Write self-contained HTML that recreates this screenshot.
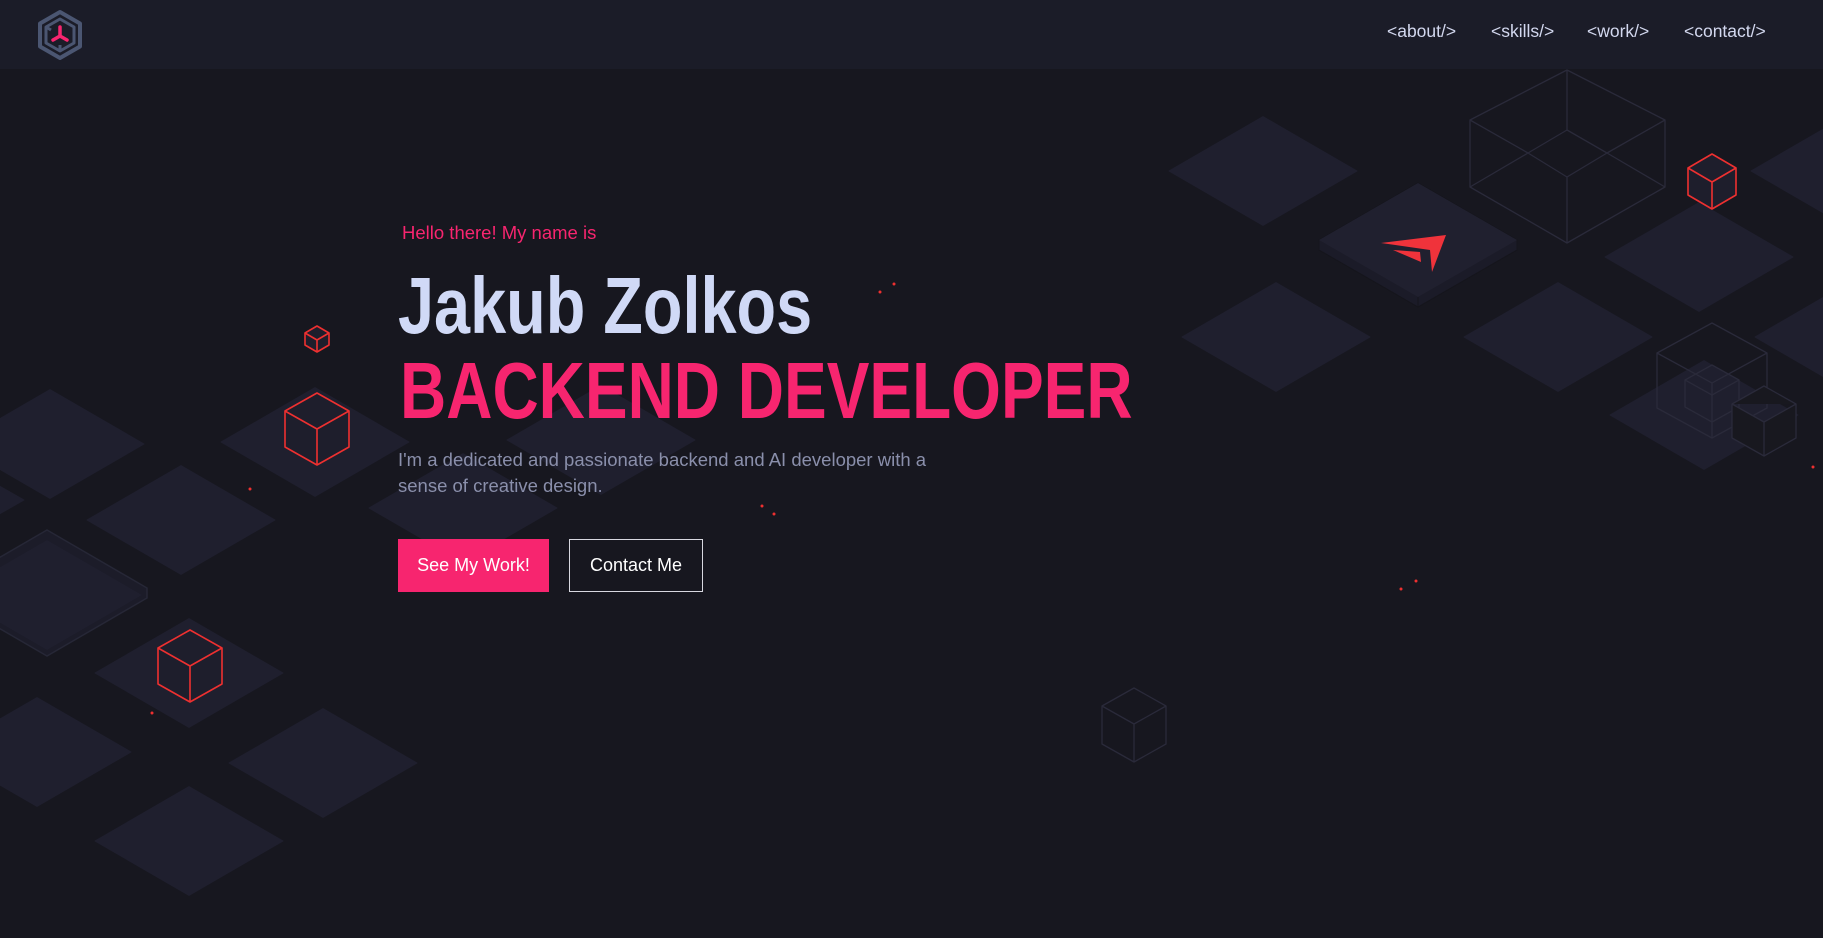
<!DOCTYPE html>
<html><head><meta charset="utf-8"><style>
*{margin:0;padding:0;box-sizing:border-box}
body{width:1823px;height:938px;overflow:hidden;background:#17171f;font-family:"Liberation Sans",sans-serif;position:relative}
svg.bg{position:absolute;left:0;top:0}
nav{position:absolute;left:0;top:0;width:1823px;height:69px;background:#1b1c28}
nav a{position:absolute;top:21px;color:#d3d8ef;font-size:17.5px;text-decoration:none}
.t{position:absolute;white-space:nowrap;transform-origin:0 0}
.btn{position:absolute;top:539px;height:53px;color:#fff;font-size:18px;display:flex;align-items:center;justify-content:center}
</style></head><body>
<svg class="bg" width="1823" height="938" viewBox="0 0 1823 938">
<g fill="#1f1f2e">
<path d="M1263,116 l95,55 -95,55 -95,-55z"/>
<path d="M1699,202 l95,55 -95,55 -95,-55z"/>
<path d="M1845,116 l95,55 -95,55 -95,-55z"/>
<path d="M1276,282 l95,55 -95,55 -95,-55z"/>
<path d="M1558,282 l95,55 -95,55 -95,-55z"/>
<path d="M1704,360 l95,55 -95,55 -95,-55z"/>
<path d="M1849,282 l95,55 -95,55 -95,-55z"/>
<path d="M50,389 l95,55 -95,55 -95,-55z"/>
<path d="M315,387 l95,55 -95,55 -95,-55z"/>
<path d="M181,465 l95,55 -95,55 -95,-55z"/>
<path d="M463,453 l95,55 -95,55 -95,-55z"/>
<path d="M601,385 l95,55 -95,55 -95,-55z"/>
<path d="M-10,480 l35,20 -35,20z"/>
<path d="M189,618 l95,55 -95,55 -95,-55z"/>
<path d="M37,697 l95,55 -95,55 -95,-55z"/>
<path d="M323,708 l95,55 -95,55 -95,-55z"/>
<path d="M189,786 l95,55 -95,55 -95,-55z"/>
</g>
<g stroke="#262736" stroke-width="1.5">
<path d="M47,530 l100,58 0,10 -100,58 -100,-58 0,-10z" fill="#1c1c29"/>
<path d="M47,540 l95,55 -95,55 -95,-55z" fill="#1f1f2e" stroke="none"/>
</g>
<path d="M1319,240 l99,-57 99,57 0,10 -99,57 -99,-57z" fill="#1b1b28" stroke="#15151c"/>
<path d="M1418,183 l99,57 -99,57 -99,-57z" fill="#20202f"/>
<path d="M1418,297 l0,10" stroke="#15151c"/>
<path d="M1381,243 L1446,235 L1432,272 L1430,250 Z" fill="#f0333b"/>
<path d="M1393,250 L1420,252 L1421,262 Z" fill="#f0333b"/>
<g fill="none" stroke="#2a2a3a" stroke-width="1.3" stroke-linejoin="round">
<path d="M1567,70 L1665,120 L1665,187 L1567,243 L1470,187 L1470,120 Z"/>
<path d="M1567,70 L1567,130 L1528,153 L1470,120 M1567,130 L1607,153 L1665,120 M1528,153 L1567,177 L1607,153 M1528,153 L1470,187 M1607,153 L1665,187 M1567,177 L1567,243"/>
<path d="M1712,323 l55,30 0,55 -55,30 -55,-30 0,-55z M1657,353 l55,30 55,-30 M1712,383 l0,55"/>
<path d="M1712,365 l27,15 0,27 -27,15 -27,-15 0,-27z M1685,380 l27,15 27,-15 M1712,395 l0,27"/>
<path d="M1764,386 l32,18 0,34 -32,18 -32,-18 0,-34z M1732,404 l32,18 32,-18 M1764,422 l0,34" fill="#18181f"/>
<path d="M1134,688 l32,18 0,38 -32,18 -32,-18 0,-38z M1102,706 l32,18 32,-18 M1134,724 l0,38"/>
</g>
<g fill="#1e1e2c" stroke="#ee3030" stroke-width="1.6" stroke-linejoin="round">
<path d="M317,326 l12,7 0,12 -12,7 -12,-7 0,-12z"/><path d="M305,333 l12,7 12,-7 M317,340 l0,12" fill="none"/>
<path d="M317,393 l32,18 0,36 -32,18 -32,-18 0,-36z"/><path d="M285,411 l32,18 32,-18 M317,429 l0,36" fill="none"/>
<path d="M190,630 l32,18 0,36 -32,18 -32,-18 0,-36z"/><path d="M158,648 l32,18 32,-18 M190,666 l0,36" fill="none"/>
<path d="M1712,154 l24,14 0,27 -24,14 -24,-14 0,-27z"/><path d="M1688,168 l24,14 24,-14 M1712,182 l0,27" fill="none"/>
</g>
<g fill="#ee3030">
<circle cx="880" cy="292" r="1.5"/><circle cx="894" cy="284" r="1.5"/><circle cx="250" cy="489" r="1.5"/>
<circle cx="762" cy="506" r="1.5"/><circle cx="774" cy="514" r="1.5"/><circle cx="1401" cy="589" r="1.5"/>
<circle cx="1416" cy="581" r="1.5"/><circle cx="152" cy="713" r="1.5"/><circle cx="1813" cy="467" r="1.5"/>
</g>
</svg>
<nav>
<svg style="position:absolute;left:36px;top:9px" width="48" height="52" viewBox="0 0 48 52">
<path d="M24,3 L44,14.5 L44,37.5 L24,49 L4,37.5 L4,14.5Z" fill="none" stroke="#4b5672" stroke-width="4" stroke-linejoin="round"/>
<path d="M24,10 L38,18 L38,34 L24,42 L10,34 L10,18Z M10,18 L15,21 M24,42 L24,36" fill="none" stroke="#4b5672" stroke-width="3" stroke-linejoin="round"/>
<path d="M24,18 L24,27 M24,27 L17,31 M24,27 L31,31" stroke="#f7256f" stroke-width="3.5" stroke-linecap="round"/>
</svg>
<a style="left:1387px">&lt;about/&gt;</a>
<a style="left:1491px">&lt;skills/&gt;</a>
<a style="left:1587px">&lt;work/&gt;</a>
<a style="left:1684px">&lt;contact/&gt;</a>
</nav>
<div class="t" style="left:402px;top:222px;font-size:18.5px;color:#f7256f">Hello there! My name is</div>
<div class="t" style="left:398px;top:260px;font-size:80px;font-weight:bold;color:#d0d9f6;transform:scaleX(0.81);line-height:92px">Jakub Zolkos</div>
<div class="t" style="left:400px;top:345px;font-size:80px;font-weight:bold;color:#f7256f;transform:scaleX(0.80);line-height:92px">BACKEND DEVELOPER</div>
<div class="t" style="left:398px;top:447px;font-size:18.5px;color:#8a8fab;line-height:26px">I'm a dedicated and passionate backend and AI developer with a<br>sense of creative design.</div>
<div class="btn" style="left:398px;width:151px;background:#f7256f">See My Work!</div>
<div class="btn" style="left:569px;width:134px;border:1px solid #d8d8e0">Contact Me</div>
</body></html>
